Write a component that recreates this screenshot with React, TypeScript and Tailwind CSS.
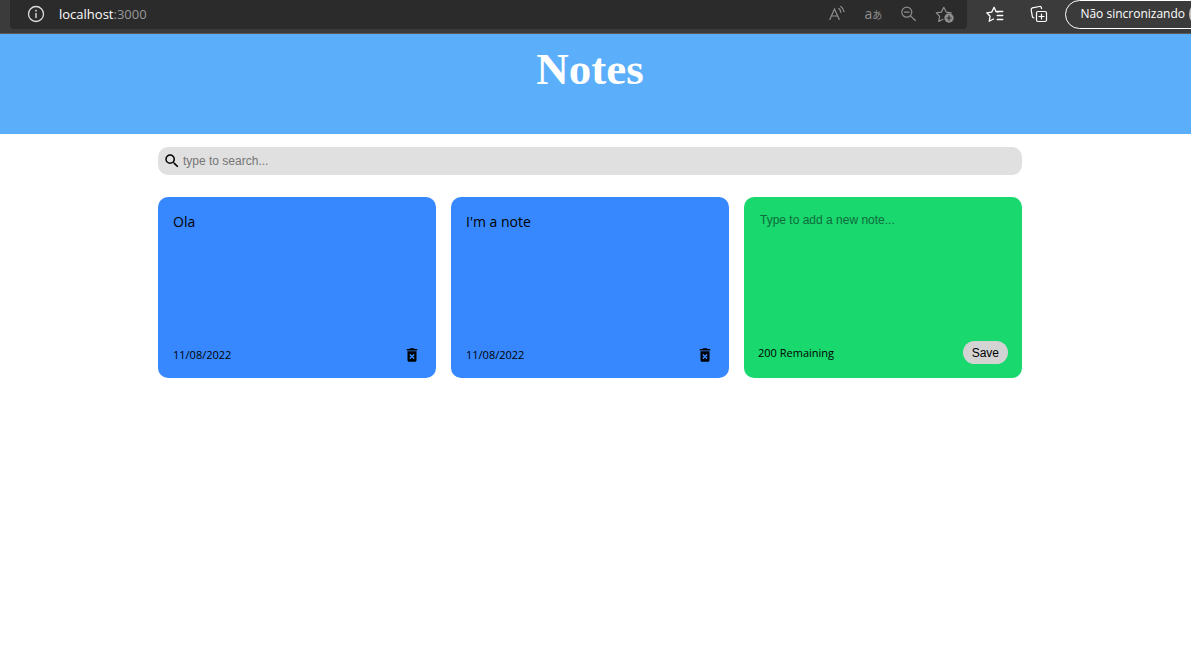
import { useState } from "react";
import { MdDeleteForever, MdSearch } from "react-icons/md";

const initialNotes = [
  { id: 1, text: "Ola", date: "11/08/2022" },
  { id: 2, text: "I'm a note", date: "11/08/2022" },
];

const LIMIT = 200;

function InfoIcon() {
  return (
    <svg className="size-5 text-[#dedede]" viewBox="0 0 20 20" fill="none" stroke="currentColor" aria-hidden="true">
      <circle cx="10" cy="10" r="7.5" strokeWidth="1.3" />
      <path d="M10 9v5" strokeWidth="1.4" />
      <circle cx="10" cy="6.7" r="0.9" fill="currentColor" stroke="none" />
    </svg>
  );
}

function ReadAloudIcon() {
  return (
    <svg className="size-5" viewBox="0 0 20 20" fill="none" stroke="currentColor" strokeWidth="1.2" strokeLinecap="round" aria-hidden="true">
      <path d="M2.800 15.500 7.500 5l4.700 10.500M4.400 12h6.200" />
      <path d="M11.800 4.500a5.500 5.500 0 0 1 2 3.800M13.800 2.500a8 8 0 0 1 3.200 5.200" />
    </svg>
  );
}

function ZoomOutIcon() {
  return (
    <svg className="size-5" viewBox="0 0 20 20" fill="none" stroke="currentColor" strokeWidth="1.2" strokeLinecap="round" aria-hidden="true">
      <circle cx="7.800" cy="8.200" r="5" />
      <path d="M5.500 8.200h4.600M11.500 11.900l4.800 4.600" />
    </svg>
  );
}

function AddFavoriteIcon() {
  return (
    <svg className="size-5" viewBox="0 0 20 20" fill="none" aria-hidden="true">
      <path
        d="m8 15.300-4.300 2.200.9-5.100L1.300 8.800l5-.7 2.500-4.800 2.400 4.800 5 .7"
        stroke="currentColor"
        strokeWidth="1.200"
        strokeLinejoin="round"
        strokeLinecap="round"
      />
      <circle cx="14" cy="14" r="4.700" fill="currentColor" />
      <path d="M14 11.500v5M11.500 14h5" stroke="#2b2b2b" strokeWidth="1.200" />
    </svg>
  );
}

function FavoritesIcon() {
  return (
    <svg className="size-5" viewBox="0 0 20 20" fill="none" stroke="currentColor" strokeWidth="1.300" strokeLinecap="round" strokeLinejoin="round" aria-hidden="true">
      <path d="m8.500 15-4.300 2.300.9-5L1.800 8.800l4.900-.7 2.400-4.800 1.900 4.400 2 .4M11.800 7.500h6M12.200 11.500h5.600M12.200 15.500h5.600" />
    </svg>
  );
}

function CollectionsIcon() {
  return (
    <svg className="size-5" viewBox="0 0 20 20" fill="none" stroke="currentColor" strokeWidth="1.200" strokeLinecap="round" strokeLinejoin="round" aria-hidden="true">
      <path d="M5 14c-1-.2-1.500-.8-1.700-1.700L2.200 5.800c-.2-1 .3-1.700 1.200-1.900l7-1.400c1-.2 1.800.3 2 1.200l.2 1" />
      <rect x="7.500" y="7.500" width="10" height="10" rx="1.500" />
      <path d="M12.500 10v5M10 12.500h5" />
    </svg>
  );
}

function BrowserBar() {
  return (
    <div className="flex h-[34px] items-start overflow-hidden border-b border-[#5a5a5a] bg-[#3b3b3b] pl-2.5 font-['Open_Sans',sans-serif] text-white">
      <div className="flex h-[29px] min-w-0 flex-1 items-center rounded-b bg-[#2b2b2b] pr-3 pb-px pl-4">
        <button type="button" aria-label="View site information">
          <InfoIcon />
        </button>
        <span className="ml-[13px] flex-1 text-[13px] leading-5">
          localhost<span className="text-[#999999]">:3000</span>
        </span>
        <div className="flex items-center gap-4 text-[#8e8e8e]">
          <button type="button" aria-label="Read aloud"><ReadAloudIcon /></button>
          <button type="button" aria-label="Translate" className="flex w-5 items-baseline justify-center leading-5">
            <span className="text-[14px]">a</span>
            <span className="font-['Noto_Sans_CJK_JP',sans-serif] text-[10px]">あ</span>
          </button>
          <button type="button" aria-label="Zoom out"><ZoomOutIcon /></button>
          <button type="button" aria-label="Add to favorites"><AddFavoriteIcon /></button>
        </div>
      </div>
      <div className="flex h-[29px] shrink-0 items-center gap-6 pr-4 pb-px pl-[18px]">
        <button type="button" aria-label="Favorites"><FavoritesIcon /></button>
        <button type="button" aria-label="Collections"><CollectionsIcon /></button>
      </div>
      <button
        type="button"
        className="-mr-[27px] flex h-[29px] shrink-0 items-center gap-1 rounded-full border border-white pr-1 pb-px pl-3.5 text-[12px] whitespace-nowrap"
      >
        Não sincronizando
        <span className="size-6 rounded-full bg-[#c4c4c4]" />
      </button>
    </div>
  );
}

function NoteCard({ text, date, onDelete }: { text: string; date: string; onDelete: () => void }) {
  return (
    <article className="flex min-h-[181px] flex-col justify-between rounded-[10px] bg-[#3788ff] px-[15px] pt-[15px] pb-3.5">
      <p className="text-[14px] leading-5">{text}</p>
      <div className="flex items-center justify-between">
        <small className="text-[11px] leading-4">{date}</small>
        <button type="button" aria-label="Delete note" onClick={onDelete}>
          <MdDeleteForever className="size-[18px]" />
        </button>
      </div>
    </article>
  );
}

export default function App() {
  const [notes, setNotes] = useState(initialNotes);
  const [query, setQuery] = useState("");
  const [draft, setDraft] = useState("");

  const save = () => {
    if (!draft.trim()) return;
    setNotes([...notes, { id: Date.now(), text: draft, date: new Date().toLocaleDateString("pt-BR") }]);
    setDraft("");
  };

  return (
    <div className="font-['Open_Sans',sans-serif] text-black">
      <BrowserBar />
      <header className="flex h-[100px] justify-center bg-[#5aaefa] pt-[9px] pr-[11px]">
        <h1 className="font-['Liberation_Serif',serif] text-[45px] leading-[52px] font-bold text-white">Notes</h1>
      </header>
      <main className="pt-[13px] pr-[11px]">
        <div className="mx-auto max-w-[864px]">
          <label className="flex h-7 items-center gap-0.5 rounded-[10px] bg-[#e0e0e0] px-[5px]">
            <MdSearch className="size-[18px] shrink-0" />
            <input
              type="text"
              aria-label="Search notes"
              placeholder="type to search..."
              value={query}
              onChange={(e) => setQuery(e.target.value)}
              className="min-w-0 flex-1 bg-transparent font-['Liberation_Sans',sans-serif] text-[12px] outline-none placeholder:text-[#757575]"
            />
          </label>
          <div className="mt-[22px] grid grid-cols-[repeat(auto-fit,minmax(250px,1fr))] gap-[15px]">
            {notes
              .filter((note) => note.text.toLowerCase().includes(query.toLowerCase()))
              .map((note) => (
                <NoteCard
                  key={note.id}
                  text={note.text}
                  date={note.date}
                  onDelete={() => setNotes(notes.filter((n) => n.id !== note.id))}
                />
              ))}
            <section className="flex min-h-[181px] flex-col justify-between rounded-[10px] bg-[#18d86e] px-3.5 pt-[15px] pb-3.5">
              <textarea
                aria-label="New note"
                placeholder="Type to add a new note..."
                rows={6}
                maxLength={LIMIT}
                value={draft}
                onChange={(e) => setDraft(e.target.value)}
                className="w-full resize-none bg-transparent px-0.5 font-['Liberation_Sans',sans-serif] text-[12px] leading-4 outline-none placeholder:text-[#116b3c]"
              />
              <div className="flex items-center justify-between">
                <small className="text-[11px] leading-4">{LIMIT - draft.length} Remaining</small>
                <button
                  type="button"
                  onClick={save}
                  className="h-[23px] rounded-full bg-[#d3d3d3] px-[9px] font-['Liberation_Sans',sans-serif] text-[12px]"
                >
                  Save
                </button>
              </div>
            </section>
          </div>
        </div>
      </main>
    </div>
  );
}
